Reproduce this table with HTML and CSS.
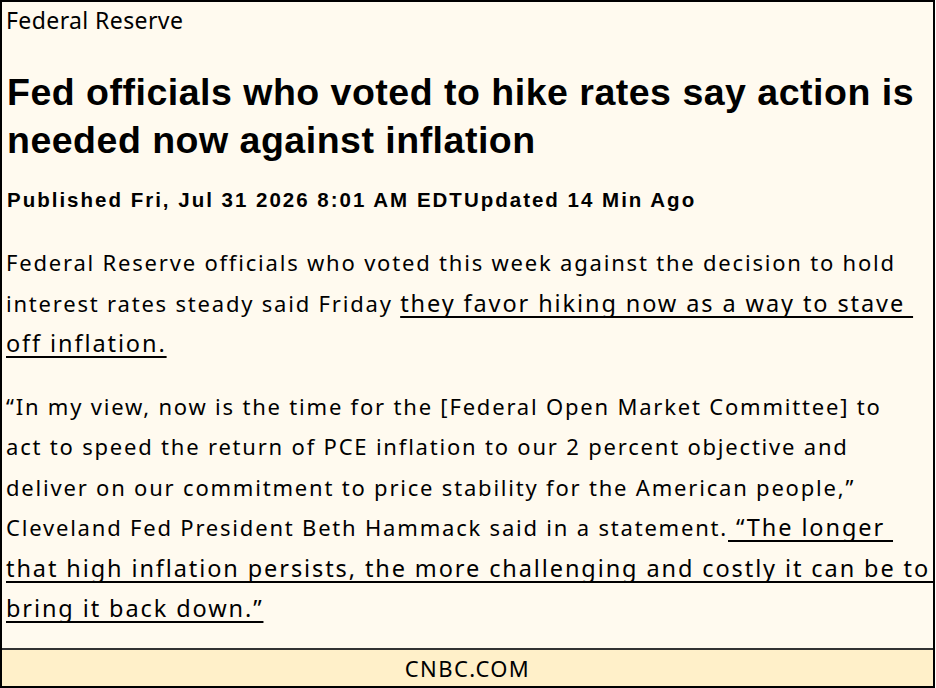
FILE: index.html
```html
<!DOCTYPE html>
<html lang="en">
<head>
<meta charset="utf-8">
<title>CNBC - Fed officials</title>
<link rel="stylesheet" href="styles.css">
</head>
<body>
<div class="card">
  <div class="content">
    <div class="kicker">Federal Reserve</div>
    <h1 class="headline">Fed officials who voted to hike rates say action is<br>needed now against inflation</h1>
    <div class="meta">Published Fri, Jul 31 2026 8:01 AM EDTUpdated 14 Min Ago</div>
    <p class="para">Federal Reserve officials who voted this week against the decision to hold<br>interest rates steady said Friday <span class="u">they favor hiking now as a way to stave&nbsp;</span><br><span class="u">off inflation.</span></p>
    <p class="para">“In my view, now is the time for the [Federal Open Market Committee] to<br>act to speed the return of PCE inflation to our 2 percent objective and<br>deliver on our commitment to price stability for the American people,”<br>Cleveland Fed President Beth Hammack said in a statement.<span class="u">&nbsp;“The longer&nbsp;</span><span class="fill"><span class="u">that high inflation persists, the more challenging and costly it can be to</span></span><span class="u">bring it back down.”</span></p>
  </div>
  <div class="source">CNBC.COM</div>
</div>
</body>
</html>
```

FILE: styles.css
```css
html, body {
  margin: 0;
  padding: 0;
  background: #ffffff;
}

.card {
  box-sizing: border-box;
  width: 935px;
  height: 688px;
  border: 2px solid #000;
  background: #fffaef;
  display: flex;
  flex-direction: column;
  color: #000;
}

.content {
  flex: 1;
  padding: 0 4px 0 4px;
  overflow: hidden;
}

.kicker {
  font-family: "Noto Sans", "Open Sans", sans-serif;
  font-size: 23px;
  line-height: 32px;
  margin-top: 2px;
  letter-spacing: 0.4px;
}

.headline {
  font-family: "Liberation Sans", Arial, sans-serif;
  font-weight: bold;
  font-size: 37.5px;
  line-height: 48px;
  margin: 32px 0 0 1px;
  letter-spacing: 0.5px;
}

.meta {
  font-family: "Liberation Sans", Arial, sans-serif;
  font-weight: bold;
  font-size: 20.5px;
  line-height: 24px;
  margin: 24px 0 0 1px;
  letter-spacing: 2px;
}

.para {
  font-family: "Noto Sans", "Open Sans", sans-serif;
  font-size: 22px;
  line-height: 40.5px;
  margin: 30px 0 0 0;
  letter-spacing: 1.8px;
  white-space: nowrap;
}

.para + .para {
  margin-top: 22px;
}

.u {
  font-size: 23.5px;
  text-decoration: underline;
  text-decoration-thickness: 2px;
  text-underline-offset: 4px;
  text-decoration-skip-ink: none;
  letter-spacing: 1.9px;
}

.fill {
  display: flex;
  align-items: baseline;
  margin-right: -4px;
}

.fill::after {
  content: "";
  flex: 1;
  border-bottom: 2px solid #000;
  transform: translateY(6px);
}

.source {
  height: 36px;
  border-top: 2px solid #333;
  background: #fff0c9;
  font-family: "Noto Sans", "Open Sans", sans-serif;
  font-size: 22px;
  letter-spacing: 1.4px;
  display: flex;
  align-items: center;
  justify-content: center;
}
```
